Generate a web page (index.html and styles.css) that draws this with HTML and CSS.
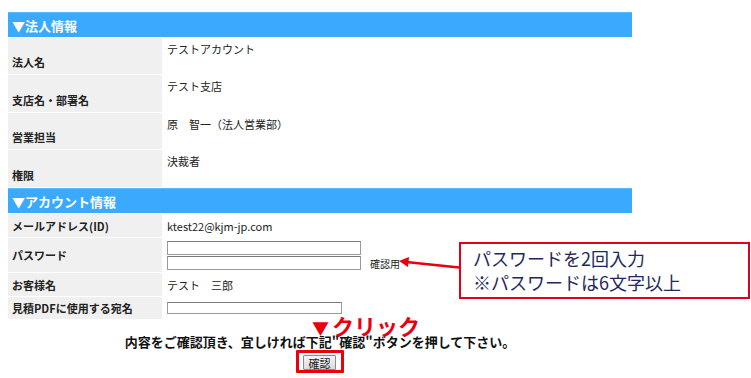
FILE: index.html
```html
<!DOCTYPE html>
<html lang="ja">
<head>
    <meta charset="UTF-8">
    <title>アカウント確認</title>
    <link rel="stylesheet" href="styles.css">
</head>
<body>
    <div class="container">
        <div class="section-title">▼法人情報</div>
        <div class="row tall">
            <div class="label bottom">法人名</div>
            <div class="value top">テストアカウント</div>
        </div>
        <div class="row tall2">
            <div class="label bottom">支店名・部署名</div>
            <div class="value top">テスト支店</div>
        </div>
        <div class="row tall">
            <div class="label bottom">営業担当</div>
            <div class="value top">原　智一（法人営業部）</div>
        </div>
        <div class="row tall2">
            <div class="label bottom">権限</div>
            <div class="value top">決裁者</div>
        </div>

        <div class="section-title">▼アカウント情報</div>
        <div class="row mail">
            <div class="label">メールアドレス(ID)</div>
            <div class="value">ktest22@kjm-jp.com</div>
        </div>
        <div class="row pass">
            <div class="label">パスワード</div>
            <div class="value">
                <div class="pass-inputs">
                    <input type="password" class="field">
                    <div class="confirm-line">
                        <input type="password" class="field">
                        <span class="note">確認用</span>
                    </div>
                </div>
            </div>
        </div>
        <div class="row name">
            <div class="label">お客様名</div>
            <div class="value">テスト　三郎</div>
        </div>
        <div class="row quote">
            <div class="label">見積PDFに使用する宛名</div>
            <div class="value"><input type="text" class="field short"></div>
        </div>

        <div class="submit-area">
            <p class="message">内容をご確認頂き、宜しければ下記"確認"ボタンを押して下さい。</p>
            <span class="highlight"><button class="submit-button">確認</button></span>
            <span class="click-mark"><span class="tri">▼</span>クリック</span>
        </div>
    </div>

    <!-- 注釈 -->
    <svg class="arrow" width="70" height="20" viewBox="0 0 70 20">
        <line x1="66" y1="12" x2="8" y2="6" stroke="#e8000f" stroke-width="2.5"/>
        <polygon points="1,5 11,1 10,11" fill="#e8000f"/>
    </svg>
    <div class="callout">パスワードを2回入力<br>※パスワードは6文字以上</div>
</body>
</html>
```

FILE: styles.css
```css
body {
    font-family: "Noto Sans CJK JP", "Noto Sans", sans-serif;
    font-size: 11px;
    color: #222;
    margin: 0;
    padding: 12px 8px 0 8px;
    background-color: #ffffff;
    position: relative;
}
.container {
    width: 624px;
    display: flex;
    flex-direction: column;
    gap: 1px;
}
.section-title {
    height: 25px;
    line-height: 25px;
    background-color: #3aa9fe;
    color: #ffffff;
    font-weight: bold;
    font-size: 13px;
    padding-left: 4px;
    border-top: 1px solid #5cb9ff;
    box-sizing: border-box;
}
.row {
    display: flex;
}
.row.tall { height: 36px; }
.row.tall2 { height: 37px; }
.row.mail { height: 23px; }
.row.pass { height: 34px; }
.row.name { height: 23px; }
.row.quote { height: 22px; }
.label {
    width: 154px;
    background-color: #f0f0f0;
    font-weight: bold;
    padding-left: 4px;
    box-sizing: border-box;
    display: flex;
    align-items: center;
}
.label.bottom {
    align-items: flex-end;
    padding-bottom: 4px;
}
.value {
    flex: 1;
    padding-left: 5px;
    display: flex;
    align-items: center;
}
.value.top {
    align-items: flex-start;
    padding-top: 3px;
}
.pass-inputs {
    display: flex;
    flex-direction: column;
    gap: 1px;
}
.confirm-line {
    display: flex;
    align-items: flex-end;
    gap: 9px;
}
.field {
    width: 194px;
    height: 14px;
    margin: 0;
    padding: 0;
    border: 1px solid #9a9a9a;
    border-top-color: #7a7a7a;
    box-sizing: border-box;
    background: #ffffff;
}
.field.short {
    width: 175px;
    height: 12px;
}
.note {
    font-size: 10px;
    line-height: 12px;
}
.submit-area {
    position: relative;
    text-align: center;
    margin-top: 14px;
}
.message {
    font-weight: bold;
    font-size: 13px;
    line-height: 16px;
    margin: 0;
    color: #111;
}
.highlight {
    display: inline-block;
    border: 3px solid #e8000f;
    padding: 2px 5px 0 4px;
    border-radius: 1px;
}
.submit-button {
    display: block;
    width: 33px;
    height: 15px;
    padding: 0;
    font-family: "Noto Sans CJK JP", sans-serif;
    font-size: 11px;
    line-height: 12px;
    background: linear-gradient(#f4f4f4, #dcdcdc);
    border: 1px solid #8a8a8a;
    border-radius: 1px;
    color: #222;
}
.click-mark {
    position: absolute;
    left: 304px;
    top: -21px;
    color: #e8000f;
    font-weight: bold;
    font-size: 22px;
    line-height: 24px;
}
.tri {
    font-size: 17px;
    margin-right: 3px;
}
.callout {
    position: absolute;
    left: 459px;
    top: 242px;
    width: 291px;
    height: 57px;
    box-sizing: border-box;
    border: 2px solid #e0001b;
    background: #ffffff;
    color: #1f2a5c;
    font-size: 18px;
    line-height: 24px;
    padding: 2px 0 0 12px;
}
.arrow {
    position: absolute;
    left: 398px;
    top: 256px;
}
```
